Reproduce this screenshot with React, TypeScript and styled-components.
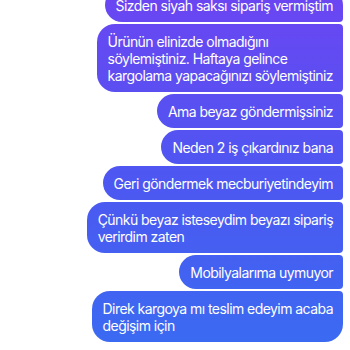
import React from "react";
import styled, { createGlobalStyle } from "styled-components";

const Global = createGlobalStyle`
  html, body { margin: 0; padding: 0; background: #ffffff; overflow: hidden; }
  body { font-family: Inter, "Noto Sans", "Liberation Sans", sans-serif; -webkit-font-smoothing: antialiased; }
`;

const Thread = styled.div`
  display: flex;
  flex-direction: column;
  align-items: flex-end;
  gap: 2px;
  padding: 0 7px 0 0;
  margin-top: -12px;
`;

const Bubble = styled.div<{ $last?: boolean; $first?: boolean }>`
  box-sizing: border-box;
  padding: 8.5px 10px 8.5px 11px;
  font-size: 14px;
  letter-spacing: -0.55px;
  line-height: 17px;
  color: #ffffff;
  white-space: nowrap;
  border-radius: 18px ${(p) => (p.$first ? "18px" : "4px")} ${(p) => (p.$last ? "18px" : "4px")} 18px;
  background: linear-gradient(180deg, #6a46f2 0px, #4d57f1 180px, #3a6bf2 350px);
  background-attachment: fixed;
`;

const messages: string[][] = [
  ["Sizden siyah saksı sipariş vermiştim"],
  ["Ürünün elinizde olmadığını", "söylemiştiniz. Haftaya gelince", "kargolama yapacağınızı söylemiştiniz"],
  ["Ama beyaz göndermişsiniz"],
  ["Neden 2 iş çıkardınız bana"],
  ["Geri göndermek mecburiyetindeyim"],
  ["Çünkü beyaz isteseydim beyazı sipariş", "verirdim zaten"],
  ["Mobilyalarıma uymuyor"],
  ["Direk kargoya mı teslim edeyim acaba", "değişim için"],
];

export default function App() {
  return (
    <>
      <Global />
      <Thread>
        {messages.map((lines, i) => (
          <Bubble key={i} $first={i === 0} $last={i === messages.length - 1}>
            {lines.map((l, j) => (
              <React.Fragment key={j}>
                {j > 0 && <br />}
                {l}
              </React.Fragment>
            ))}
          </Bubble>
        ))}
      </Thread>
    </>
  );
}
